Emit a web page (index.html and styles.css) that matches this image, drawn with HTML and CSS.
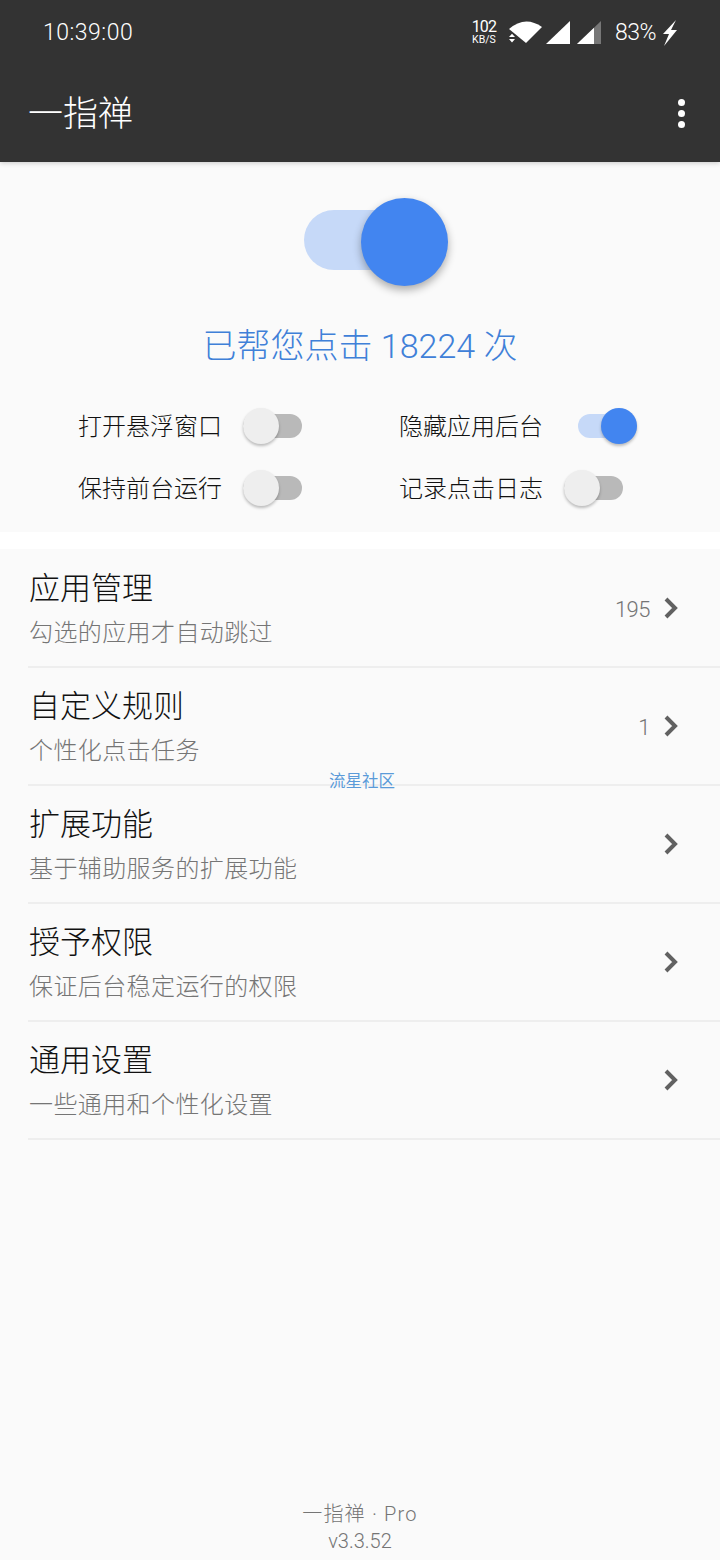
FILE: index.html
```html
<!DOCTYPE html>
<html lang="zh-CN">
<head>
  <meta charset="UTF-8" />
  <meta name="viewport" content="width=device-width, initial-scale=1.0" />
  <title>一指禅</title>
  <link rel="stylesheet" href="styles.css">
</head>
<body>
  <header class="header">
    <div class="status-bar">
      <span class="time">10:39:00</span>
      <div class="status-icons">
        <div class="speed"><span class="speed-num">102</span><span class="speed-unit">KB/S</span></div>
        <svg class="wifi" width="34" height="24" viewBox="0 0 34 24">
          <path d="M17 23 L0 9 Q16 -5 33 7 Z" fill="#fff"/>
          <path d="M3.5 19 L0.5 15.5 H6.5 Z" transform="translate(0 -1)" fill="#333"/>
          <path d="M0 17 L3 13.8 L6 17 Z M0 19 H6 L3 22.5 Z" fill="#fff"/>
        </svg>
        <svg class="signal" width="24" height="24" viewBox="0 0 24 24">
          <path d="M0 23 L24 0 V23 Z" fill="#fff"/>
        </svg>
        <svg class="signal" width="24" height="24" viewBox="0 0 24 24">
          <path d="M0 23 L24 0 V23 Z" fill="#777"/>
          <path d="M0 23 L17 6.7 V23 Z" fill="#fff"/>
        </svg>
        <span class="battery">83%</span>
        <svg class="bolt" width="16" height="26" viewBox="0 0 16 26">
          <path d="M14 0 L1 14 H7 L2 26 L15 10 H9 Z" fill="#fff"/>
        </svg>
      </div>
    </div>
    <div class="app-bar">
      <h1 class="app-title">一指禅</h1>
      <div class="more"><i></i><i></i><i></i></div>
    </div>
  </header>

  <section class="panel">
    <div class="big-switch">
      <div class="big-track"></div>
      <div class="big-thumb"></div>
    </div>
    <p class="count">已帮您点击 18224 次</p>
    <div class="options">
      <div class="option"><span>打开悬浮窗口</span><div class="switch"><div class="track"></div><div class="thumb"></div></div></div>
      <div class="option"><span>隐藏应用后台</span><div class="switch on"><div class="track"></div><div class="thumb"></div></div></div>
      <div class="option"><span>保持前台运行</span><div class="switch"><div class="track"></div><div class="thumb"></div></div></div>
      <div class="option"><span>记录点击日志</span><div class="switch"><div class="track"></div><div class="thumb"></div></div></div>
    </div>
  </section>

  <main class="list">
    <div class="row">
      <div class="row-text"><div class="row-title">应用管理</div><div class="row-sub">勾选的应用才自动跳过</div></div>
      <span class="row-count">195</span>
      <svg class="chevron" width="16" height="22" viewBox="0 0 16 22"><path d="M3 2 L12 11 L3 20" fill="none" stroke="#616161" stroke-width="4"/></svg>
    </div>
    <div class="row">
      <div class="row-text"><div class="row-title">自定义规则</div><div class="row-sub">个性化点击任务</div></div>
      <span class="row-count">1</span>
      <svg class="chevron" width="16" height="22" viewBox="0 0 16 22"><path d="M3 2 L12 11 L3 20" fill="none" stroke="#616161" stroke-width="4"/></svg>
    </div>
    <div class="row">
      <div class="row-text"><div class="row-title">扩展功能</div><div class="row-sub">基于辅助服务的扩展功能</div></div>
      <svg class="chevron" width="16" height="22" viewBox="0 0 16 22"><path d="M3 2 L12 11 L3 20" fill="none" stroke="#616161" stroke-width="4"/></svg>
    </div>
    <div class="row">
      <div class="row-text"><div class="row-title">授予权限</div><div class="row-sub">保证后台稳定运行的权限</div></div>
      <svg class="chevron" width="16" height="22" viewBox="0 0 16 22"><path d="M3 2 L12 11 L3 20" fill="none" stroke="#616161" stroke-width="4"/></svg>
    </div>
    <div class="row">
      <div class="row-text"><div class="row-title">通用设置</div><div class="row-sub">一些通用和个性化设置</div></div>
      <svg class="chevron" width="16" height="22" viewBox="0 0 16 22"><path d="M3 2 L12 11 L3 20" fill="none" stroke="#616161" stroke-width="4"/></svg>
    </div>
    <footer class="footer">
      <div class="footer-name">一指禅 · Pro</div>
      <div>v3.3.52</div>
    </footer>
  </main>

  <div class="watermark">流星社区</div>
</body>
</html>
```

FILE: styles.css
```css
* {
  box-sizing: border-box;
}

html, body {
  margin: 0;
  padding: 0;
}

body {
  width: 720px;
  height: 1560px;
  background: #fff;
  font-family: Roboto, "Noto Sans CJK SC", sans-serif;
  display: flex;
  flex-direction: column;
  position: relative;
  overflow: hidden;
}

.header {
  height: 162px;
  background: #333333;
  color: #fff;
  position: relative;
  z-index: 1;
  box-shadow: 0 1px 5px rgba(0,0,0,0.2);
}

.status-bar {
  height: 64px;
  padding: 0 42px 0 43px;
  display: flex;
  justify-content: space-between;
  align-items: center;
}

.time {
  font-size: 23px;
  font-weight: 300;
  letter-spacing: 0.5px;
}

.status-icons {
  display: flex;
  align-items: center;
}

.speed {
  display: flex;
  flex-direction: column;
  align-items: center;
  gap: 1px;
  width: 26px;
  margin-top: 1px;
  margin-right: 12px;
}

.speed-num {
  font-size: 16px;
  line-height: 13px;
  letter-spacing: -0.8px;
}

.speed-unit {
  font-size: 10.5px;
  line-height: 11px;
}

.wifi {
  margin-right: 3px;
  margin-top: 0;
}

.signal {
  margin-right: 7px;
  margin-top: 1px;
}

.signal + .signal {
  margin-right: 14px;
}

.battery {
  font-size: 23px;
  font-weight: 300;
  margin-right: 6px;
  letter-spacing: -0.5px;
}

.bolt {
  margin-top: 1px;
}

.app-bar {
  height: 98px;
  padding: 0 35px 0 28px;
  display: flex;
  justify-content: space-between;
  align-items: center;
}

.app-title {
  margin: 0 0 6px;
  font-size: 35px;
  font-weight: 300;
  font-family: "Noto Sans CJK SC", sans-serif;
}

.more {
  display: flex;
  flex-direction: column;
  gap: 4px;
}

.more i {
  display: block;
  width: 7px;
  height: 7px;
  border-radius: 50%;
  background: #fff;
}

.panel {
  height: 370px;
  background: #fafafa;
  padding-top: 36px;
  display: flex;
  flex-direction: column;
  align-items: center;
}

.big-switch {
  width: 144px;
  height: 88px;
  margin-left: 32px;
  position: relative;
  display: flex;
  align-items: center;
}

.big-track {
  width: 118px;
  height: 60px;
  margin-top: -4px;
  border-radius: 30px;
  background: #c6d9f8;
}

.big-thumb {
  position: absolute;
  right: 0;
  top: 0;
  width: 87px;
  height: 88px;
  border-radius: 50%;
  background: #4285f0;
  box-shadow: 0 4px 8px rgba(0,0,0,0.32);
}

.count {
  margin: 36px 0 0;
  font-size: 34px;
  line-height: 48px;
  color: #3f80d8;
  font-weight: 300;
}

.options {
  margin-top: 28px;
  width: 100%;
  padding-left: 78px;
  display: grid;
  grid-template-columns: 321px 1fr;
  row-gap: 10px;
}

.option {
  height: 52px;
  display: flex;
  align-items: center;
  font-size: 24px;
  font-weight: 300;
  color: #111111;
  font-family: "Noto Sans CJK SC", sans-serif;
}

.switch {
  margin-left: 21px;
  margin-top: 3px;
  width: 59px;
  height: 36px;
  position: relative;
  display: flex;
  align-items: center;
}

.track {
  width: 100%;
  height: 24px;
  border-radius: 12px;
  background: #b9b9b9;
}

.thumb {
  position: absolute;
  left: 0;
  top: 0;
  width: 36px;
  height: 36px;
  border-radius: 50%;
  background: #eeeeee;
  box-shadow: 0 2px 3px rgba(0,0,0,0.25);
}

.switch.on {
  margin-left: 35px;
}

.on .track {
  background: #c6d9f8;
}

.on .thumb {
  left: auto;
  right: 0;
  background: #4285f0;
}

.list {
  margin-top: 17px;
  padding-top: 1px;
  flex: 1;
  background: #fafafa;
  display: flex;
  flex-direction: column;
}

.row {
  height: 118px;
  margin-left: 28px;
  padding-right: 41px;
  border-bottom: 2px solid #eeeeee;
  display: flex;
  align-items: center;
}

.row-text {
  flex: 1;
  margin-bottom: 4px;
  font-family: "Noto Sans CJK SC", sans-serif;
  font-weight: 300;
}

.row-title {
  font-size: 31px;
  line-height: 44px;
  color: #111111;
  padding-left: 1px;
}

.row-sub {
  font-size: 24px;
  line-height: 34px;
  margin-top: 6px;
  color: #757575;
  letter-spacing: 0.4px;
  padding-left: 1px;
}

.row-count {
  font-size: 22px;
  font-weight: 300;
  color: #757575;
  margin-right: 13px;
  margin-top: 2px;
  letter-spacing: -0.5px;
}

.footer {
  margin-top: auto;
  height: 59px;
  text-align: center;
  font-size: 20px;
  line-height: 27px;
  font-weight: 300;
  color: #757575;
  font-family: Roboto, "Noto Sans CJK SC", sans-serif;
}

.footer-name {
  letter-spacing: 1.2px;
}

.watermark {
  position: absolute;
  left: 329px;
  top: 771px;
  font-size: 16.5px;
  line-height: 18px;
  color: #5b9bd9;
  font-family: "Noto Sans CJK SC", sans-serif;
}
```
